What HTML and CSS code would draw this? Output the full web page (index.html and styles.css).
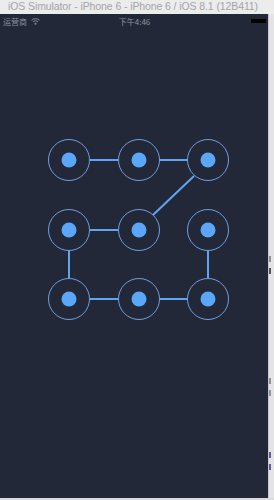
FILE: index.html
```html
<!DOCTYPE html>
<html>
<head>
<meta charset="utf-8">
<link rel="stylesheet" href="styles.css">
</head>
<body>
<div class="titlebar">iOS Simulator - iPhone 6 - iPhone 6 / iOS 8.1 (12B411)</div>
<div class="main">
  <div class="screen">
    <div class="status">
      <div class="carrier">运营商
        <svg class="wifi" width="9" height="7" viewBox="0 0 9 7"><path d="M0.5 2.2 A6 6 0 0 1 8.5 2.2" fill="none" stroke="#8a8f9c" stroke-width="1"/><path d="M2 3.8 A3.8 3.8 0 0 1 7 3.8" fill="none" stroke="#8a8f9c" stroke-width="1"/><circle cx="4.5" cy="5.8" r="1" fill="#8a8f9c"/></svg>
      </div>
      <div class="time">下午4:46</div>
      <div class="battery"></div>
    </div>
    <svg class="lock" width="268" height="400" viewBox="0 0 268 400">
      <g stroke="#5ea6f2" stroke-width="2" fill="none">
        <line x1="90" y1="132" x2="118" y2="132"/>
        <line x1="160" y1="132" x2="187" y2="132"/>
        <line x1="194" y1="148" x2="153" y2="187"/>
        <line x1="90" y1="202" x2="118" y2="202"/>
        <line x1="69" y1="223" x2="69" y2="250"/>
        <line x1="90" y1="271" x2="118" y2="271"/>
        <line x1="160" y1="271" x2="187" y2="271"/>
        <line x1="208" y1="223" x2="208" y2="250"/>
      </g>
      <g stroke="#6f9fdc" stroke-width="1" fill="none">
        <circle cx="69" cy="132" r="20.5"/>
        <circle cx="139" cy="132" r="20.5"/>
        <circle cx="208" cy="132" r="20.5"/>
        <circle cx="69" cy="202" r="20.5"/>
        <circle cx="139" cy="202" r="20.5"/>
        <circle cx="208" cy="202" r="20.5"/>
        <circle cx="69" cy="271" r="20.5"/>
        <circle cx="139" cy="271" r="20.5"/>
        <circle cx="208" cy="271" r="20.5"/>
      </g>
      <g fill="#5aa6f8">
        <circle cx="69" cy="132" r="7.5"/>
        <circle cx="139" cy="132" r="7.5"/>
        <circle cx="208" cy="132" r="7.5"/>
        <circle cx="69" cy="202" r="7.5"/>
        <circle cx="139" cy="202" r="7.5"/>
        <circle cx="208" cy="202" r="7.5"/>
        <circle cx="69" cy="271" r="7.5"/>
        <circle cx="139" cy="271" r="7.5"/>
        <circle cx="208" cy="271" r="7.5"/>
      </g>
    </svg>
  </div>
  <div class="side">
    <span class="mark m1"></span>
    <span class="mark m2"></span>
    <span class="mark m3"></span>
    <span class="mark m4"></span>
    <span class="mark m5"></span>
    <span class="mark m6"></span>
  </div>
</div>
<div class="bottom"></div>
</body>
</html>
```
FILE: styles.css
```css
html, body {
  margin: 0;
  padding: 0;
  width: 274px;
  height: 500px;
  overflow: hidden;
  background: #e6e6e6;
  font-family: "Liberation Sans", Arial, "Noto Sans CJK SC", sans-serif;
}
.titlebar {
  height: 14px;
  line-height: 13px;
  font-size: 10.5px;
  color: #a4a4a4;
  text-align: center;
  background: #ececec;
  white-space: nowrap;
  letter-spacing: -0.1px;
  padding-right: 8px;
}
.main {
  display: flex;
  height: 484px;
}
.screen {
  width: 268px;
  background: #222838;
  display: flex;
  flex-direction: column;
}
.status {
  height: 14px;
  display: flex;
  align-items: center;
  justify-content: space-between;
  padding: 0 2px 0 3px;
  font-size: 8px;
  color: #8a8f9c;
  font-family: "Noto Sans CJK SC", sans-serif;
}
.carrier {
  display: flex;
  align-items: center;
  gap: 4px;
  width: 60px;
}
.time {
  color: #9095a2;
}
.battery {
  width: 15px;
  height: 4px;
  background: #000;
  margin-left: 45px;
}
.lock {
  display: block;
}
.side {
  flex: 1;
  background: #e4e4e6;
  border-left: 1px solid #c8c8cc;
  display: flex;
  flex-direction: column;
}
.mark {
  display: block;
  width: 2px;
  height: 6px;
  background: #6a7090;
}
.m1 { margin-top: 242px; background: #8a9890; }
.m2 { margin-top: 6px; background: #555; }
.m3 { margin-top: 104px; background: #8a9890; }
.m4 { margin-top: 6px; background: #8a98a0; }
.m5 { margin-top: 56px; background: #5e5aa0; }
.m6 { margin-top: 6px; background: #5e5aa0; }
.bottom {
  height: 2px;
  background: #dcdcdc;
}
```
